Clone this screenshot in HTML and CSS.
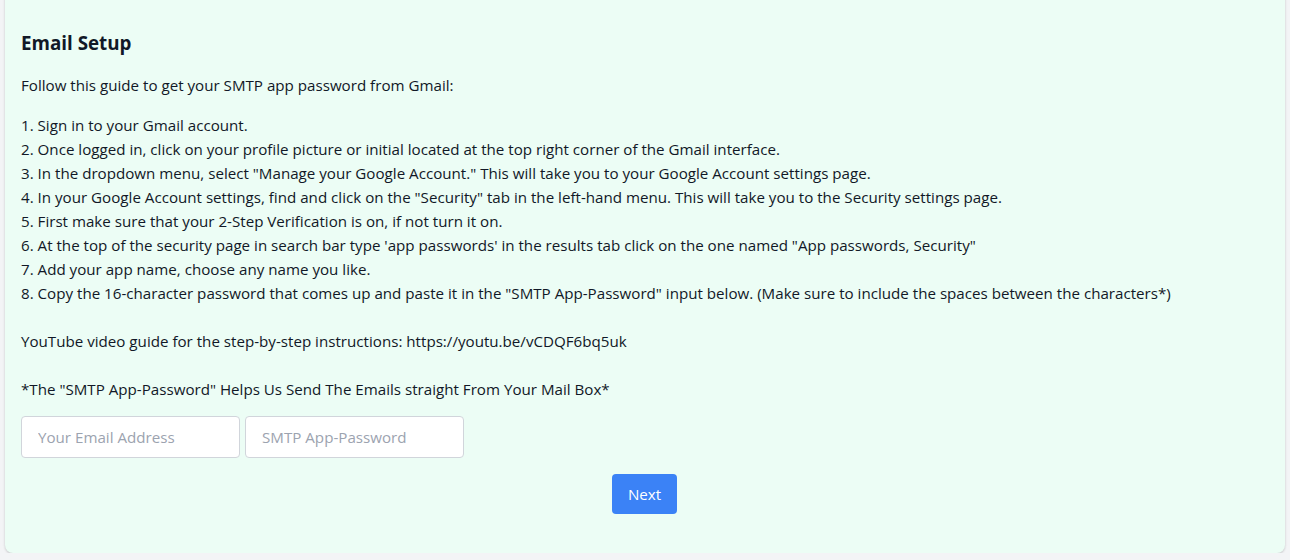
FILE: index.html
```html
<!DOCTYPE html>
<html>
<head>
<meta charset="utf-8">
<link rel="stylesheet" href="styles.css">
</head>
<body>
<div class="page">
  <div class="card">
    <h2 class="title">Email Setup</h2>
    <p class="intro">Follow this guide to get your SMTP app password from Gmail:</p>
    <div class="steps">
      <p>1. Sign in to your Gmail account.</p>
      <p>2. Once logged in, click on your profile picture or initial located at the top right corner of the Gmail interface.</p>
      <p>3. In the dropdown menu, select "Manage your Google Account." This will take you to your Google Account settings page.</p>
      <p>4. In your Google Account settings, find and click on the "Security" tab in the left-hand menu. This will take you to the Security settings page.</p>
      <p>5. First make sure that your 2-Step Verification is on, if not turn it on.</p>
      <p>6. At the top of the security page in search bar type 'app passwords' in the results tab click on the one named "App passwords, Security"</p>
      <p>7. Add your app name, choose any name you like.</p>
      <p>8. Copy the 16-character password that comes up and paste it in the "SMTP App-Password" input below. (Make sure to include the spaces between the characters*)</p>
      <p class="blank">&nbsp;</p>
      <p>YouTube video guide for the step-by-step instructions: https://youtu.be/vCDQF6bq5uk</p>
      <p class="blank">&nbsp;</p>
      <p>*The "SMTP App-Password" Helps Us Send The Emails straight From Your Mail Box*</p>
    </div>
    <div class="inputs">
      <input class="field" type="text" placeholder="Your Email Address">
      <input class="field" type="text" placeholder="SMTP App-Password">
    </div>
    <div class="actions">
      <button class="next">Next</button>
    </div>
  </div>
</div>
</body>
</html>
```
FILE: styles.css
```css
html, body {
  margin: 0;
  padding: 0;
  background: #f3f4f6;
  font-family: "Open Sans", "Noto Sans", sans-serif;
  color: #111827;
}
.page {
  padding: 0 5px 0 5px;
  margin-top: -19px;
}
.card {
  background: #ecfdf5;
  border-radius: 8px;
  box-shadow: 0 1px 3px rgba(0,0,0,0.12), 0 1px 2px rgba(0,0,0,0.08);
  padding: 48px 16px 39px;
  font-size: 15.15px;
}
.title {
  margin: 0;
  font-size: 18.8px;
  font-weight: 700;
  line-height: 28px;
}
.intro {
  margin: 16px 0 16px;
  line-height: 24px;
}
.steps p {
  margin: 0;
  line-height: 24px;
}
.steps {
  margin-bottom: 15px;
}
.inputs {
  display: flex;
  gap: 5px;
}
.field {
  width: 219px;
  height: 42px;
  box-sizing: border-box;
  border: 1px solid #d1d5db;
  border-radius: 4px;
  background: #fff;
  padding: 0 16px;
  font: inherit;
  font-size: 15.15px;
  color: #111827;
}
.field::placeholder {
  color: #9ca3af;
}
.actions {
  display: flex;
  justify-content: center;
  margin-top: 16px;
}
.next {
  background: #3b82f6;
  color: #fff;
  border: none;
  border-radius: 4px;
  width: 65px;
  height: 40px;
  font: inherit;
  font-size: 15.15px;
  margin-right: 1px;
}
```
